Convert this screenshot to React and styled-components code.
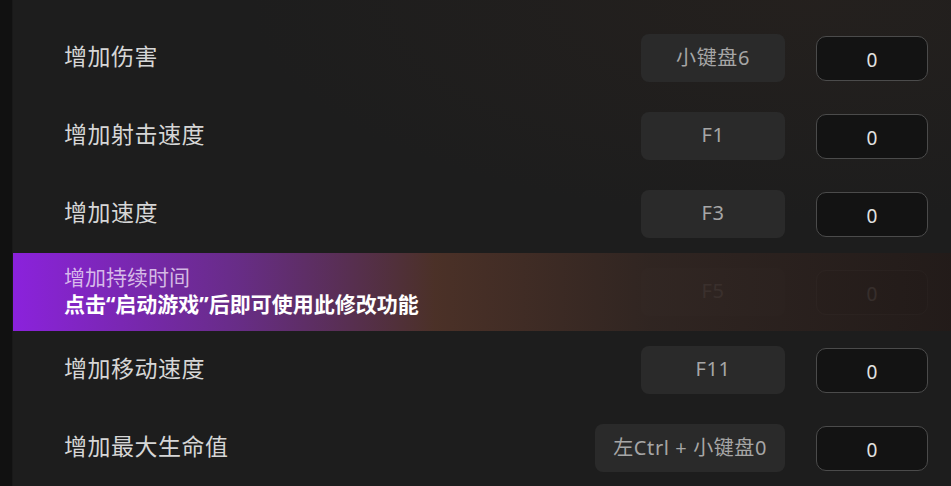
import styled, { createGlobalStyle } from "styled-components";

const ROWS = [
  { name: "增加伤害", key: "小键盘6", value: 0 },
  { name: "增加射击速度", key: "F1", value: 0 },
  { name: "增加速度", key: "F3", value: 0 },
  { name: "增加持续时间", key: "F5", value: 0, locked: true },
  { name: "增加移动速度", key: "F11", value: 0 },
  { name: "增加最大生命值", key: "左Ctrl + 小键盘0", value: 0 },
];

const GlobalStyle = createGlobalStyle`
  html, body {
    margin: 0;
    height: 100%;
    background: #111;
    overflow: hidden;
  }
  body {
    font-family: "Noto Sans", "Noto Sans CJK SC", sans-serif;
  }
`;

export default function App() {
  return (
    <>
      <GlobalStyle />
      <Page>
        <Strip />
        <Main>
          {ROWS.map((row) => (
            <Row key={row.name}>
              <Label $hidden={row.locked}>{row.name}</Label>
              <Controls>
                <HotKey>{row.key}</HotKey>
                <ValueBox>{row.value}</ValueBox>
              </Controls>
              {row.locked && (
                <LockOverlay>
                  <LockTitle>{row.name}</LockTitle>
                  <LockHint>点击“启动游戏”后即可使用此修改功能</LockHint>
                </LockOverlay>
              )}
            </Row>
          ))}
        </Main>
      </Page>
    </>
  );
}

const Page = styled.div`
  display: flex;
  height: 100vh;
`;

const Strip = styled.div`
  width: 12px;
  flex-shrink: 0;
  background: #111111;
  border-right: 1px solid #191919;
`;

const Main = styled.div`
  flex: 1;
  display: flex;
  flex-direction: column;
  padding-top: 19px;
  background:
    radial-gradient(ellipse 60% 45% at 85% 0%, rgba(38, 33, 30, 0.8), rgba(29, 29, 29, 0) 100%),
    #1d1d1d;
`;

const Row = styled.div`
  position: relative;
  display: flex;
  align-items: center;
  justify-content: space-between;
  height: 78px;
  flex-shrink: 0;
  padding: 0 23px 0 51px;
`;

const Label = styled.div`
  font-size: 23px;
  color: #d6d6d6;
  letter-spacing: 0.5px;
  padding-bottom: 6px;
  visibility: ${(p) => (p.$hidden ? "hidden" : "visible")};
`;

const Controls = styled.div`
  display: flex;
  align-items: center;
  gap: 31px;
`;

const HotKey = styled.div`
  min-width: 144px;
  height: 48px;
  box-sizing: border-box;
  padding: 0 18px 3px;
  display: flex;
  align-items: center;
  justify-content: center;
  background: #2a2a2a;
  border-radius: 8px;
  color: #a6a6a6;
  font-size: 20px;
  letter-spacing: 0.6px;
  white-space: nowrap;
`;

const ValueBox = styled.div`
  width: 112px;
  height: 45px;
  box-sizing: border-box;
  display: flex;
  align-items: center;
  justify-content: center;
  padding-top: 3px;
  background: #131313;
  border: 1.5px solid #4b4b4b;
  border-radius: 10px;
  color: #e2e2e2;
  font-size: 19px;
`;

const LockOverlay = styled.div`
  position: absolute;
  inset: 0;
  display: flex;
  flex-direction: column;
  justify-content: center;
  padding: 0 0 3px 51px;
  background: linear-gradient(
    90deg,
    rgba(139, 34, 220, 1) 0%,
    rgba(106, 45, 138, 0.97) 24%,
    rgba(78, 50, 40, 0.94) 45%,
    rgba(50, 38, 34, 0.9) 68%,
    rgba(35, 27, 25, 0.92) 100%
  );
`;

const LockTitle = styled.div`
  font-size: 21px;
  line-height: 27px;
  color: rgba(235, 220, 245, 0.82);
`;

const LockHint = styled.div`
  font-size: 21px;
  line-height: 27px;
  font-weight: 700;
  color: #ffffff;
`;
